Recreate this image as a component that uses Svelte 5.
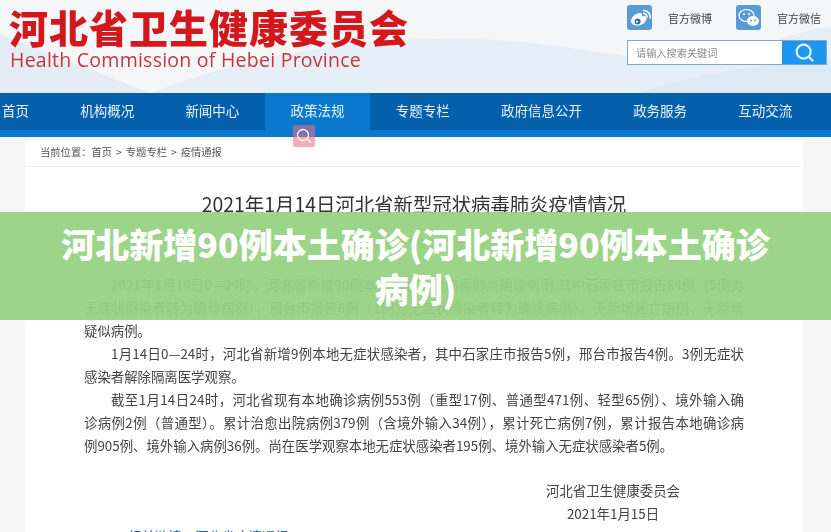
<script>
	const nav = ["首页", "机构概况", "新闻中心", "政策法规", "专题专栏", "政府信息公开", "政务服务", "互动交流"];
	const crumbs = ["首页", "专题专栏", "疫情通报"];
</script>

<div class="page">
	<header class="top">
		<svg class="waves" viewBox="0 0 831 93" preserveAspectRatio="none" aria-hidden="true">
			<path d="M0 34 L150 93 L0 93Z" fill="#e4edf6" />
			<path d="M150 93 C260 50 400 30 520 42 C590 48 640 62 690 60 C740 58 790 30 831 27 L831 93Z" fill="#e6eff8" />
			<path d="M640 93 C700 70 770 66 831 58 L831 93Z" fill="#dde9f5" />
		</svg>
		<div class="brand">
			<div class="cn">河北省卫生健康委员会</div>
			<div class="en">Health Commission of Hebei Province</div>
		</div>
		<div class="tools">
			<div class="social">
				<span class="tile">
					<svg viewBox="0 0 24 24" width="24" height="24">
						<path d="M3 15.500C3 11 8 7 12 7c2 0 2.600 1.500 2 3.400 2.500-.8 4.500-.4 4.500 1.800 0 4-4.500 7.300-9 7.300C5.500 19.500 3 17.800 3 15.500Z" fill="#fff" />
						<circle cx="9.600" cy="15.400" r="3" fill="#3b6f9f" />
						<circle cx="9" cy="15.800" r="1" fill="#fff" />
						<path d="M15 7.500a3.500 3.500 0 0 1 4 4.300M15 4.500a6.500 6.500 0 0 1 7 8" fill="none" stroke="#fff" stroke-width="1.500" />
					</svg>
				</span>
				<span class="label">官方微博</span>
				<span class="tile">
					<svg viewBox="0 0 24 24" width="24" height="24">
						<ellipse cx="9.500" cy="9.500" rx="7.500" ry="6" fill="none" stroke="#fff" stroke-width="1.200" />
						<circle cx="7" cy="8" r="1" fill="#fff" />
						<circle cx="12" cy="8" r="1" fill="#fff" />
						<ellipse cx="16" cy="15" rx="6" ry="5" fill="#fff" />
						<circle cx="14" cy="14.500" r=".9" fill="#5b9bd5" />
						<circle cx="18" cy="14.500" r=".9" fill="#5b9bd5" />
					</svg>
				</span>
				<span class="label">官方微信</span>
			</div>
			<div class="search">
				<span class="hint">请输入搜索关键词</span>
				<span class="go">
					<svg viewBox="0 0 24 24" width="21" height="21" fill="none" stroke="#e8f5ff" stroke-width="2.400">
						<circle cx="11" cy="11" r="8" />
						<path d="M16.500 16.500 L22 22" />
					</svg>
				</span>
			</div>
		</div>
	</header>

	<nav class="nav">
		{#each nav as item, i}
			<span class="item" class:active={i === 3}>{item}</span>
		{/each}
	</nav>
	<div class="strip"></div>

	<main class="card">
		<div class="crumbs">
			当前位置：{#each crumbs as c, i}{#if i > 0}<span class="sep">&gt;</span>{/if}{c}{/each}
		</div>
		<h2>2021年1月14日河北省新型冠状病毒肺炎疫情情况</h2>
		<div class="meta">
			<span>来源：河北省卫生健康委员会</span>
			<span>A⁺ &nbsp; A⁻</span>
		</div>
		<article>
			<p><span class="first">2021年1月14日0—24时，河北省新增90例本土新型冠状病毒肺炎确诊病例,其中石家庄市报告84例（5例为</span>
				<span class="line">无症状感染者转为确诊病例），邢台市报告6例（1例为无症状感染者转为确诊病例）。无新增死亡病例，无新增</span>
				<span>疑似病例。</span></p>
			<p><span class="first">1月14日0—24时，河北省新增9例本地无症状感染者，其中石家庄市报告5例，邢台市报告4例。3例无症状</span>
				<span>感染者解除隔离医学观察。</span></p>
			<p><span class="first">截至1月14日24时，河北省现有本地确诊病例553例（重型17例、普通型471例、轻型65例）、境外输入确</span>
				<span class="line">诊病例2例（普通型）。累计治愈出院病例379例（含境外输入34例），累计死亡病例7例，累计报告本地确诊病</span>
				<span>例905例、境外输入病例36例。尚在医学观察本地无症状感染者195例、境外输入无症状感染者5例。</span></p>
			<div class="sign">
				<div>河北省卫生健康委员会</div>
				<div>2021年1月15日</div>
			</div>
			<div class="more">相关链接：河北省疫情通报</div>
		</article>
	</main>

	<span class="float">
		<svg viewBox="0 0 22 22" width="22" height="22" fill="none" stroke="#fff" stroke-width="1.300">
			<circle cx="10" cy="10" r="5.500" />
			<path d="M14 14 L18 17.500" />
		</svg>
	</span>

	<div class="banner">
		<h1>河北新增90例本土确诊(河北新增90例本土确诊病例)</h1>
	</div>
</div>

<style>
	:global(body) {
		margin: 0;
		background: #f6f6f6;
	}

	.page {
		position: relative;
		width: 831px;
		height: 532px;
		overflow: hidden;
		font-family: "Noto Sans CJK SC", "Noto Sans", sans-serif;
		background: #f6f6f6;
	}

	/* header */

	.top {
		position: relative;
		height: 93px;
		display: flex;
		justify-content: space-between;
		background: #f5f6f8;
		filter: blur(0.5px);
	}

	.waves {
		position: absolute;
		inset: 0;
		width: 100%;
		height: 100%;
	}

	.brand {
		position: relative;
		padding: 0 0 0 9px;
	}

	.cn {
		margin-top: 5px;
		font-size: 39px;
		line-height: 42px;
		letter-spacing: 1px;
		font-weight: 900;
		color: #d2171d;
		white-space: nowrap;
	}

	.en {
		padding-left: 1px;
		font-family: "Open Sans", sans-serif;
		font-size: 19.500px;
		line-height: 26px;
		letter-spacing: 0.25px;
		color: #c8353b;
		white-space: nowrap;
	}

	.tools {
		position: relative;
		width: 200px;
		margin-right: 4px;
		padding-top: 5px;
	}

	.social {
		display: flex;
		align-items: center;
		height: 25px;
	}

	.tile {
		width: 25px;
		height: 25px;
		border-radius: 3px;
		background: #5b9bd5;
		display: flex;
		align-items: center;
		justify-content: center;
	}

	.label {
		width: 84px;
		padding-left: 16px;
		box-sizing: border-box;
		font-size: 11px;
		color: #444;
	}

	.label:last-child {
		width: auto;
	}

	.search {
		margin-top: 10px;
		height: 25px;
		display: flex;
		box-sizing: border-box;
		border: 1px solid #7fa7c9;
		background: #fff;
	}

	.hint {
		flex: 1;
		padding-left: 8px;
		font-size: 10.200px;
		line-height: 23px;
		color: #8a8a8a;
	}

	.go {
		width: 44px;
		background: #1c97ef;
		display: flex;
		align-items: center;
		justify-content: center;
	}

	/* nav */

	.nav {
		height: 37px;
		display: flex;
		background: #0560ac;
		filter: blur(0.4px);
	}

	.item {
		padding: 0 25.600px;
		font-size: 13.500px;
		line-height: 35px;
		color: #e8f0f8;
		white-space: nowrap;
	}

	.item:first-child {
		padding-left: 2px;
	}

	.item.active {
		background: #0a78cc;
	}

	.strip {
		height: 7px;
		background: #0a78cc;
	}

	.float {
		position: absolute;
		left: 293px;
		top: 125px;
		width: 22px;
		height: 22px;
		border-radius: 2px;
		background: rgba(238, 110, 125, 0.55);
		filter: blur(0.4px);
	}

	/* article card */

	.card {
		box-sizing: border-box;
		width: 778px;
		height: 395px;
		margin: 3px 0 0 25px;
		background: #fff;
		filter: blur(0.5px);
		color: #444;
	}

	.crumbs {
		height: 26px;
		margin-right: 2px;
		padding-left: 15px;
		font-size: 10.300px;
		line-height: 23px;
		color: #555;
		border-bottom: 1px solid #eee;
	}

	.sep {
		margin: 0 4px;
	}

	h2 {
		margin: 24px 0 0;
		font-size: 19.400px;
		line-height: 26px;
		font-weight: 400;
		text-align: center;
		color: #333;
	}

	.meta {
		display: flex;
		justify-content: space-between;
		margin: 18px 98px 0 305px;
		font-size: 11px;
		line-height: 16px;
		color: #777;
	}

	article {
		margin: 22px 59px 0;
		font-size: 13.400px;
		line-height: 23px;
	}

	p {
		margin: 0;
	}

	p span {
		display: block;
		white-space: nowrap;
	}

	.first {
		text-indent: 27px;
		text-align: justify;
		text-align-last: justify;
		white-space: normal !important;
	}

	.line {
		text-align: justify;
		text-align-last: justify;
		white-space: normal !important;
	}

	.sign {
		margin-top: 22px;
		margin-left: 461px;
		width: 136px;
		text-align: center;
	}

	.more {
		padding-left: 44px;
		color: #1a5fa8;
	}

	/* banner */

	.banner {
		position: absolute;
		left: 0;
		right: 0;
		top: 212px;
		height: 108px;
		display: flex;
		align-items: center;
		justify-content: center;
		background: rgba(150, 210, 130, 0.94);
	}

	h1 {
		width: 730px;
		margin: 0;
		font-size: 34px;
		line-height: 45px;
		font-weight: 900;
		text-align: center;
		color: #fff;
	}
</style>
